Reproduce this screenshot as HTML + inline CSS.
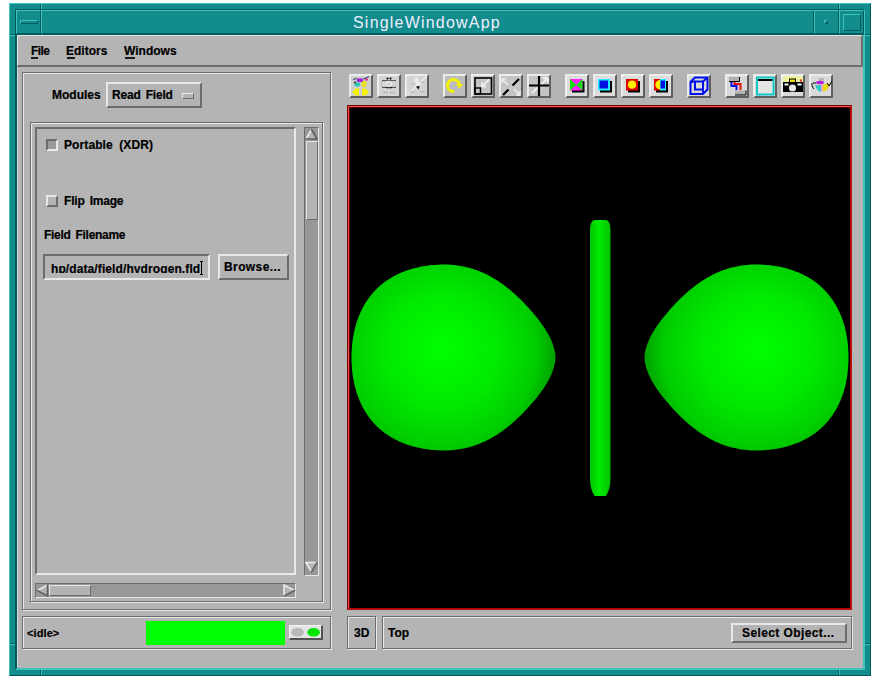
<!DOCTYPE html>
<html><head><meta charset="utf-8">
<style>
*{margin:0;padding:0;box-sizing:border-box}
html,body{width:876px;height:683px;overflow:hidden;background:#fff}
body{position:relative;font-family:"Liberation Sans",sans-serif}
.a{position:absolute}
.t{position:absolute;font-family:"Liberation Sans",sans-serif;font-weight:bold;font-size:12px;line-height:14px;color:#000;white-space:pre;-webkit-text-stroke:0.2px #000}
/* motif bevels */
.up{border-style:solid;border-color:#e8e8e8 #6c6c6c #6c6c6c #e8e8e8}
.dn{border-style:solid;border-color:#6c6c6c #e8e8e8 #e8e8e8 #6c6c6c}
.tup{border-style:solid;border-color:#3cc4bc #005c5c #005c5c #3cc4bc}
.tdn{border-style:solid;border-color:#005c5c #3cc4bc #3cc4bc #005c5c}
.etch{position:absolute;border:1px solid #6c6c6c;box-shadow:inset 1px 1px 0 #e8e8e8, 1px 1px 0 #e8e8e8}
</style></head><body>

<!-- window frame -->
<div class="a tup" style="left:9px;top:3px;width:862px;height:673px;border-width:1px;background:#128c8c"></div>
<!-- frame corner breaks -->
<div class="a" style="left:40px;top:4px;width:1px;height:6px;background:#005c5c"></div>
<div class="a" style="left:41px;top:4px;width:1px;height:6px;background:#3cc4bc"></div>
<div class="a" style="left:838px;top:4px;width:1px;height:6px;background:#005c5c"></div>
<div class="a" style="left:839px;top:4px;width:1px;height:6px;background:#3cc4bc"></div>
<div class="a" style="left:40px;top:668px;width:1px;height:7px;background:#005c5c"></div>
<div class="a" style="left:41px;top:668px;width:1px;height:7px;background:#3cc4bc"></div>
<div class="a" style="left:838px;top:668px;width:1px;height:7px;background:#005c5c"></div>
<div class="a" style="left:839px;top:668px;width:1px;height:7px;background:#3cc4bc"></div>
<div class="a" style="left:10px;top:34px;width:6px;height:1px;background:#005c5c"></div>
<div class="a" style="left:10px;top:35px;width:6px;height:1px;background:#3cc4bc"></div>
<div class="a" style="left:864px;top:34px;width:6px;height:1px;background:#005c5c"></div>
<div class="a" style="left:864px;top:35px;width:6px;height:1px;background:#3cc4bc"></div>
<div class="a" style="left:10px;top:643px;width:6px;height:1px;background:#005c5c"></div>
<div class="a" style="left:10px;top:644px;width:6px;height:1px;background:#3cc4bc"></div>
<div class="a" style="left:864px;top:643px;width:6px;height:1px;background:#005c5c"></div>
<div class="a" style="left:864px;top:644px;width:6px;height:1px;background:#3cc4bc"></div>
<!-- inner frame bevel -->
<div class="a tdn" style="left:15px;top:9px;width:850px;height:661px;border-width:1px;background:#128c8c"></div>
<!-- title bar buttons -->
<div class="a tup" style="left:16px;top:10px;width:25px;height:24px;border-width:1px"></div>
<div class="a tup" style="left:20px;top:20px;width:18px;height:4px;border-width:1px"></div>
<div class="a tup" style="left:41px;top:10px;width:773px;height:24px;border-width:1px"></div>
<div class="a tup" style="left:814px;top:10px;width:25px;height:24px;border-width:1px"></div>
<div class="a tup" style="left:824px;top:20px;width:4px;height:4px;border-width:1px"></div>
<div class="a tup" style="left:839px;top:10px;width:25px;height:24px;border-width:1px"></div>
<div class="a tup" style="left:843px;top:14px;width:18px;height:17px;border-width:1px"></div>
<div class="a" style="left:353px;top:12px;width:160px;height:22px;font-family:'Liberation Sans',sans-serif;font-size:16px;line-height:22px;color:#eef;letter-spacing:1.2px;white-space:pre">SingleWindowApp</div>

<!-- client area -->
<div class="a" style="left:16px;top:34px;width:848px;height:635px;background:#b4b4b4;border-style:solid;border-width:1px 1px 1px 1px;border-color:#005c5c #3cc4bc #3cc4bc #005c5c"></div>
<div class="a" style="left:17px;top:35px;width:1px;height:632px;background:#d8d8d8"></div>
<!-- menubar -->
<div class="a up" style="left:17px;top:35px;width:846px;height:32px;border-width:1px 2px 2px 1px"></div>
<div class="t" style="left:31px;top:44px;letter-spacing:-0.6px">File</div>
<div class="a" style="left:31px;top:57px;width:7px;height:2px;background:#1a1a1a"></div>
<div class="t" style="left:66px;top:44px">Editors</div>
<div class="a" style="left:67px;top:57px;width:8px;height:2px;background:#1a1a1a"></div>
<div class="t" style="left:124px;top:44px">Windows</div>
<div class="a" style="left:125px;top:57px;width:10px;height:2px;background:#1a1a1a"></div>

<!-- left panel -->
<div class="etch" style="left:22px;top:72px;width:309px;height:538px"></div>
<div class="t" style="left:52px;top:88px">Modules</div>
<div class="a up" style="left:106px;top:82px;width:96px;height:26px;border-width:2px"></div>
<div class="t" style="left:112px;top:88px;letter-spacing:-0.2px;word-spacing:2px">Read Field</div>
<div class="a up" style="left:182px;top:93px;width:12px;height:6px;border-width:1px"></div>

<!-- scrolled window -->
<div class="etch" style="left:30px;top:122px;width:293px;height:480px"></div>
<div class="a dn" style="left:35px;top:127px;width:261px;height:448px;border-width:2px"></div>
<div class="a dn" style="left:46px;top:139px;width:12px;height:12px;border-width:2px;background:#9a9a9a"></div>
<div class="t" style="left:64px;top:138px;letter-spacing:0.1px;word-spacing:3px">Portable (XDR)</div>
<div class="a up" style="left:46px;top:195px;width:12px;height:12px;border-width:2px"></div>
<div class="t" style="left:64px;top:194px;letter-spacing:-0.2px;word-spacing:2px">Flip Image</div>
<div class="t" style="left:44px;top:228px;letter-spacing:-0.3px;word-spacing:2px">Field Filename</div>
<div class="a dn" style="left:43px;top:254px;width:167px;height:26px;border-width:2px;overflow:hidden"></div>
<div class="a" style="left:45px;top:256px;width:163px;height:17px;overflow:hidden"><div class="t" style="left:6px;top:6px;letter-spacing:0.1px">hp/data/field/hydrogen.fld</div></div>
<div class="a" style="left:201px;top:261px;width:1px;height:14px;background:#000"></div>
<div class="a" style="left:200px;top:261px;width:3px;height:1px;background:#000"></div>
<div class="a" style="left:200px;top:274px;width:3px;height:1px;background:#000"></div>
<div class="a up" style="left:218px;top:254px;width:71px;height:26px;border-width:2px"></div>
<div class="t" style="left:224px;top:260px;letter-spacing:0.4px">Browse...</div>

<!-- v scrollbar -->
<div class="a dn" style="left:304px;top:127px;width:15px;height:449px;border-width:1px;background:#989898"></div>
<div class="a up" style="left:306px;top:141px;width:12px;height:79px;border-width:1px;background:#b4b4b4"></div>
<!-- h scrollbar -->
<div class="a dn" style="left:35px;top:583px;width:261px;height:15px;border-width:1px;background:#989898"></div>
<div class="a up" style="left:49px;top:585px;width:42px;height:11px;border-width:1px;background:#b4b4b4"></div>
<svg class="a" style="left:0;top:0" width="876" height="683" viewBox="0 0 876 683">
<g stroke-width="1.6" stroke-linecap="square">
<polygon points="311.5,129.5 306,139 317,139" fill="#b4b4b4"/>
<path d="M311.5,129.5 L306,139" stroke="#ececec" fill="none"/>
<path d="M311.5,129.5 L317,139 L306,139" stroke="#606060" fill="none"/>
<polygon points="306,562.5 317,562.5 311.5,572" fill="#b4b4b4"/>
<path d="M317,562.5 L306,562.5 L311.5,572" stroke="#ececec" fill="none"/>
<path d="M317,562.5 L311.5,572" stroke="#606060" fill="none"/>
<polygon points="37,590.5 47.5,585 47.5,596" fill="#b4b4b4"/>
<path d="M47.5,585 L37,590.5" stroke="#ececec" fill="none"/>
<path d="M37,590.5 L47.5,596 L47.5,585" stroke="#606060" fill="none"/>
<polygon points="294.5,590.5 284,585 284,596" fill="#b4b4b4"/>
<path d="M284,596 L284,585 L294.5,590.5" stroke="#ececec" fill="none"/>
<path d="M294.5,590.5 L284,596" stroke="#606060" fill="none"/>
</g>
</svg>

<!-- status left -->
<div class="etch" style="left:22px;top:616px;width:309px;height:33px"></div>
<div class="t" style="left:27px;top:626px;font-size:11px;letter-spacing:0.1px">&lt;idle&gt;</div>
<div class="a" style="left:146px;top:621px;width:139px;height:24px;background:#00ff00"></div>
<div class="a" style="left:289px;top:625px;width:34px;height:15px;background:#e4e4e4;border-style:solid;border-width:1px 2px 2px 1px;border-color:#f4f4f4 #505050 #505050 #f4f4f4"></div>
<svg class="a" style="left:289px;top:625px" width="34" height="15" viewBox="0 0 34 15">
<ellipse cx="8.6" cy="7.3" rx="6.3" ry="4.3" fill="#b8b8b8"/>
<ellipse cx="24.6" cy="7.3" rx="6.3" ry="4.3" fill="#00e400"/>
</svg>

<!-- toolbar -->
<div class="a" style="left:349px;top:74px;width:24px;height:24px;background:#cfcfcf;border-style:solid;border-width:2px;border-color:#ececec #606060 #606060 #ececec"></div>
<div class="a" style="left:377px;top:74px;width:24px;height:24px;background:#d4d4d4;border-style:solid;border-width:2px;border-color:#ececec #606060 #606060 #ececec"></div>
<div class="a" style="left:405px;top:74px;width:24px;height:24px;background:#d4d4d4;border-style:solid;border-width:2px;border-color:#ececec #606060 #606060 #ececec"></div>
<div class="a" style="left:443px;top:74px;width:24px;height:24px;background:#bcbcbc;border-style:solid;border-width:2px;border-color:#ececec #606060 #606060 #ececec"></div>
<div class="a" style="left:471px;top:74px;width:24px;height:24px;background:#c4c4c4;border-style:solid;border-width:2px;border-color:#ececec #606060 #606060 #ececec"></div>
<div class="a" style="left:499px;top:74px;width:24px;height:24px;background:#c4c4c4;border-style:solid;border-width:2px;border-color:#ececec #606060 #606060 #ececec"></div>
<div class="a" style="left:527px;top:74px;width:24px;height:24px;background:#c4c4c4;border-style:solid;border-width:2px;border-color:#ececec #606060 #606060 #ececec"></div>
<div class="a" style="left:565px;top:74px;width:24px;height:24px;background:#dcdcdc;border-style:solid;border-width:2px;border-color:#ececec #606060 #606060 #ececec"></div>
<div class="a" style="left:593px;top:74px;width:24px;height:24px;background:#dcdcdc;border-style:solid;border-width:2px;border-color:#ececec #606060 #606060 #ececec"></div>
<div class="a" style="left:621px;top:74px;width:24px;height:24px;background:#dcdcdc;border-style:solid;border-width:2px;border-color:#ececec #606060 #606060 #ececec"></div>
<div class="a" style="left:649px;top:74px;width:24px;height:24px;background:#dcdcdc;border-style:solid;border-width:2px;border-color:#ececec #606060 #606060 #ececec"></div>
<div class="a" style="left:687px;top:74px;width:24px;height:24px;background:#d8d8d8;border-style:solid;border-width:2px;border-color:#ececec #606060 #606060 #ececec"></div>
<div class="a" style="left:725px;top:74px;width:24px;height:24px;background:#d8d8d8;border-style:solid;border-width:2px;border-color:#ececec #606060 #606060 #ececec"></div>
<div class="a" style="left:753px;top:74px;width:24px;height:24px;background:#dadada;border-style:solid;border-width:2px;border-color:#ececec #606060 #606060 #ececec"></div>
<div class="a" style="left:781px;top:74px;width:24px;height:24px;background:#dadada;border-style:solid;border-width:2px;border-color:#ececec #606060 #606060 #ececec"></div>
<div class="a" style="left:809px;top:74px;width:24px;height:24px;background:#dadada;border-style:solid;border-width:2px;border-color:#ececec #606060 #606060 #ececec"></div>
<svg class="a" style="left:0;top:0" width="876" height="110" viewBox="0 0 876 110">
<!-- 1 -->
<g>
<path d="M353,80 l2,-1.5 l3,1 M363,79 l3,-1 l3,-1.5" stroke="#303060" stroke-width="1" fill="none"/>
<ellipse cx="360" cy="80.3" rx="3.2" ry="2" fill="#a020e0"/>
<circle cx="366.5" cy="79.5" r="1.2" fill="#e02080"/>
<ellipse cx="357.3" cy="84.5" rx="2.8" ry="2.2" fill="#30c8b8"/>
<ellipse cx="364" cy="84" rx="2.6" ry="3.2" fill="#e8e020"/>
<circle cx="355" cy="82.5" r="1" fill="#202020"/>
<path d="M352,92 l3.5,-3.5 h3.5 v7 h-3.5 z" fill="#f4f400"/>
<path d="M369,92 l-3.5,-3.5 h-3.5 v7 h3.5 z" fill="#f4f400"/>
</g>
<!-- 2 grayed -->
<g>
<line x1="382" y1="80.5" x2="396" y2="80.5" stroke="#606060" stroke-width="1"/>
<line x1="382" y1="87.5" x2="396" y2="87.5" stroke="#505050" stroke-width="1"/>
<circle cx="387.5" cy="78.6" r="1.1" fill="#101010"/><circle cx="390.5" cy="78.6" r="1.1" fill="#101010"/>
<circle cx="387.5" cy="87.5" r="1.1" fill="#101010"/><circle cx="390.5" cy="87.5" r="1.1" fill="#101010"/>
<rect x="381.5" y="81.5" width="14.5" height="5" fill="none" stroke="#b4b4b4" stroke-width="1" stroke-dasharray="1,1"/>
<circle cx="388.7" cy="84" r="2.8" fill="none" stroke="#f4f4f4" stroke-width="1"/>
<path d="M383,92.5 h5 M390,92.5 h5" stroke="#bcbcbc" stroke-width="2"/>
</g>
<!-- 3 grayed -->
<g>
<path d="M408,94 L427,76" stroke="#f0f0f0" stroke-width="1.2" fill="none"/>
<path d="M414,78 l3,-1 l3,9 l-3,2 z" fill="#ececec"/>
<path d="M411,84 h4 M421,82 h4 M410,92 h5 M420,92 h5" stroke="#bcbcbc" stroke-width="1.5" fill="none"/>
<path d="M416,86.5 l2.5,3 l1.2,-3.5 z" fill="#000"/>
</g>
<!-- 4 rotate -->
<g>
<path d="M453,91.5 A6,6 0 1 1 459.5,85" stroke="#f4f400" stroke-width="3" fill="none" stroke-linecap="round"/>
<path d="M456,84 l7,0 l-3.5,4.5 z" fill="#f4f400"/>
</g>
<!-- 5 -->
<g>
<rect x="475" y="78" width="16.5" height="16" fill="none" stroke="#000" stroke-width="1.6"/>
<rect x="475" y="88" width="5.5" height="6" fill="none" stroke="#000" stroke-width="1.4"/>
<path d="M489,79.5 L482,86.5 M482,86.5 v-4 M482,86.5 h4" stroke="#eeeeee" stroke-width="2" fill="none"/>
</g>
<!-- 6 -->
<g>
<path d="M519,79 L512.5,85.5 M508.5,89.5 L503,95" stroke="#000" stroke-width="2.2" fill="none"/>
<path d="M502,79 l6,6 M502,79 h4 M502,79 v4 M520,95 l-6,-6 M520,95 h-4 M520,95 v-4" stroke="#eeeeee" stroke-width="1.5" fill="none"/>
</g>
<!-- 7 -->
<g>
<path d="M532,93 L548,78 M548,78 h-5 M548,78 v5" stroke="#eeeeee" stroke-width="2" fill="none"/>
<path d="M539,76 V96 M529,85.5 H549" stroke="#000" stroke-width="2.2" fill="none"/>
</g>
<!-- 8 -->
<g>
<rect x="572" y="81" width="12.5" height="11.5" fill="#000"/>
<rect x="570" y="79" width="12.5" height="11.5" fill="#ff20ff"/>
<path d="M570,79 L576.25,84.75 L570,90.5 Z M582.5,79 L576.25,84.75 L582.5,90.5 Z" fill="#10e010"/>
</g>
<!-- 9 -->
<g>
<rect x="600" y="81" width="12" height="11.5" fill="#000"/>
<rect x="598" y="79" width="12" height="11.5" fill="#20f0ff"/>
<rect x="599.5" y="80.5" width="8.5" height="8" fill="#0010e0"/>
</g>
<!-- 10 -->
<g>
<rect x="628" y="81" width="12" height="11.5" fill="#000"/>
<rect x="626" y="79" width="12" height="11.5" fill="#e00000"/>
<circle cx="632" cy="84.7" r="4.1" fill="#ffee00"/>
</g>
<!-- 11 -->
<g>
<rect x="656" y="81" width="12" height="11.5" fill="#000"/>
<rect x="654" y="79" width="6.5" height="11.5" fill="#e00000"/>
<path d="M660,80 A4.7,4.7 0 0 0 660,89.4 Z" fill="#ffee00"/>
<rect x="660" y="79" width="6" height="11.5" fill="#20f0ff"/>
<rect x="660.5" y="80.5" width="4.5" height="8" fill="#0010e0"/>
</g>
<!-- 12 cube -->
<g fill="none" stroke="#0010e8" stroke-width="2">
<path d="M695,77.5 H707.5 V89.5 L703,94 H690.5 V82 Z"/>
<rect x="695" y="81.5" width="8" height="8"/>
<path d="M690.5,82 L695,81.5 M707.5,77.5 L703,81.5 M703,94 L703,89.5"/>
</g>
<!-- 13 -->
<g>
<rect x="729" y="77" width="10.5" height="4.5" fill="#b0b0b0"/>
<path d="M729,81.5 H739.5 V77" stroke="#000" stroke-width="1" fill="none"/>
<path d="M731.5,82 V86 H736.5 V90" stroke="#0010e0" stroke-width="2" fill="none"/>
<path d="M734.5,82 V84 H740.5 V90" stroke="#e01010" stroke-width="2" fill="none"/>
<rect x="735" y="90.5" width="11" height="4.5" fill="#b0b0b0"/>
<path d="M735,95 H746 V90.5" stroke="#000" stroke-width="1" fill="none"/>
</g>
<!-- 14 -->
<g>
<rect x="757" y="77.5" width="16.5" height="17" fill="#e4e4e4" stroke="#10c8c8" stroke-width="2"/>
<rect x="758" y="79" width="14.5" height="2" fill="#000"/>
</g>
<!-- 15 camera -->
<g>
<rect x="783" y="76" width="20" height="6" fill="#f0f0a0"/>
<rect x="783" y="82" width="20" height="10" fill="#000"/>
<rect x="789.5" y="79" width="6" height="3.5" fill="#f0e000" stroke="#000" stroke-width="1"/>
<rect x="784.5" y="83.5" width="4" height="2" fill="#fff"/>
<rect x="797.5" y="83.5" width="4" height="2" fill="#fff"/>
<circle cx="792.5" cy="88" r="3.6" fill="#e8e8e8"/>
<rect x="800" y="79.5" width="2" height="2" fill="#e02020"/>
</g>
<!-- 16 teapot -->
<g>
<rect x="819" y="78" width="5" height="3" fill="#b8b8b8"/>
<path d="M813,83 h3 M812,83 v3 l2,3" stroke="#000" stroke-width="1" fill="none"/>
<ellipse cx="820" cy="82.5" rx="4" ry="1.8" fill="#b020d0"/>
<path d="M815,85 Q820,95 828,89 L830,83 Q822,85 815,85 Z" fill="#ffa0d0"/>
<path d="M815,85 Q817,91 821,92 L821,85 Z" fill="#30c8c8"/>
<path d="M823,85 L829,83 Q829,90 823,92 Z" fill="#e8e000"/>
<path d="M827,83 l2,3 l3,-5" stroke="#000" stroke-width="1" fill="none"/>
</g>
</svg>

<!-- viewport -->
<div class="a" style="left:347px;top:105px;width:505px;height:505px;background:#000;border-style:solid;border-width:1px;border-color:#700808 #c01010 #c01010 #700808"></div>
<div class="a" style="left:348px;top:106px;width:503px;height:503px;border-style:solid;border-width:1px;border-color:#ff4848 #b00000 #b00000 #ff4848"></div>
<div class="a" style="left:349px;top:107px;width:501px;height:501px;border-style:solid;border-width:1px 0 0 1px;border-color:#600000"></div>

<svg class="a" style="left:0;top:0" width="876" height="683" viewBox="0 0 876 683">
<defs>
<radialGradient id="gL" gradientUnits="userSpaceOnUse" cx="442" cy="352" r="112" fx="442" fy="348">
<stop offset="0" stop-color="#00ff00"/><stop offset="0.5" stop-color="#00ea00"/><stop offset="0.85" stop-color="#00cc00"/><stop offset="1" stop-color="#00a400"/></radialGradient>
<radialGradient id="gR" gradientUnits="userSpaceOnUse" cx="758" cy="352" r="112" fx="758" fy="348">
<stop offset="0" stop-color="#00ff00"/><stop offset="0.5" stop-color="#00ea00"/><stop offset="0.85" stop-color="#00cc00"/><stop offset="1" stop-color="#00a400"/></radialGradient>
<linearGradient id="gD" x1="0" y1="0" x2="1" y2="0">
<stop offset="0" stop-color="#00c400"/><stop offset="0.45" stop-color="#00ec00"/><stop offset="1" stop-color="#00c000"/></linearGradient>
<clipPath id="vc"><rect x="350" y="107" width="500" height="501"/></clipPath>
</defs>
<g clip-path="url(#vc)">
<path d="M351.5,357.5 L351.5,354.2 L351.7,351.0 L351.9,347.8 L352.1,344.5 L352.5,341.3 L353.0,338.0 L353.5,334.8 L354.2,331.6 L354.9,328.4 L355.8,325.2 L356.7,322.0 L357.8,318.9 L359.0,315.8 L360.3,312.7 L361.7,309.7 L363.2,306.7 L364.9,303.8 L366.7,301.0 L368.6,298.2 L370.7,295.5 L372.8,292.9 L375.1,290.5 L377.5,288.1 L379.9,285.8 L382.5,283.7 L385.2,281.6 L388.0,279.7 L390.8,277.9 L393.7,276.2 L396.7,274.7 L399.7,273.3 L402.8,272.0 L405.9,270.8 L409.0,269.7 L412.2,268.8 L415.4,267.9 L418.6,267.2 L421.8,266.5 L425.0,266.0 L428.3,265.5 L431.5,265.1 L434.8,264.9 L438.0,264.7 L441.2,264.5 L444.5,264.5 L447.8,264.6 L451.0,264.7 L454.2,265.0 L457.4,265.4 L460.6,265.9 L463.8,266.5 L467.0,267.2 L470.1,268.1 L473.2,269.0 L476.3,270.0 L479.4,271.2 L482.4,272.4 L485.3,273.8 L488.2,275.2 L491.1,276.7 L493.9,278.4 L496.7,280.1 L499.5,281.9 L502.1,283.7 L504.8,285.7 L507.4,287.7 L509.9,289.8 L512.4,291.9 L514.9,294.1 L517.4,296.4 L519.8,298.7 L522.1,301.1 L524.5,303.5 L528.0,307.3 L530.4,309.9 L532.7,312.6 L535.0,315.3 L537.3,318.1 L539.5,321.0 L541.7,324.0 L543.9,327.1 L545.9,330.3 L547.9,333.6 L549.7,337.1 L551.4,340.6 L552.8,344.2 L554.0,347.9 L554.9,351.7 L555.4,355.6 L555.4,359.4 L554.9,363.3 L554.0,367.1 L552.8,370.8 L551.4,374.4 L549.7,377.9 L547.9,381.4 L545.9,384.7 L543.9,387.9 L541.7,391.0 L539.5,394.0 L537.3,396.9 L535.0,399.7 L532.7,402.4 L530.4,405.1 L528.0,407.7 L524.5,411.5 L522.1,413.9 L519.8,416.3 L517.4,418.6 L514.9,420.9 L512.4,423.1 L509.9,425.2 L507.4,427.3 L504.8,429.3 L502.1,431.3 L499.5,433.1 L496.7,434.9 L493.9,436.6 L491.1,438.3 L488.2,439.8 L485.3,441.2 L482.4,442.6 L479.4,443.8 L476.3,445.0 L473.2,446.0 L470.1,446.9 L467.0,447.8 L463.8,448.5 L460.6,449.1 L457.4,449.6 L454.2,450.0 L451.0,450.3 L447.8,450.4 L444.5,450.5 L441.2,450.5 L438.0,450.3 L434.8,450.1 L431.5,449.9 L428.3,449.5 L425.0,449.0 L421.8,448.5 L418.6,447.8 L415.4,447.1 L412.2,446.2 L409.0,445.3 L405.9,444.2 L402.8,443.0 L399.7,441.7 L396.7,440.3 L393.7,438.8 L390.8,437.1 L388.0,435.3 L385.2,433.4 L382.5,431.3 L379.9,429.2 L377.5,426.9 L375.1,424.5 L372.8,422.1 L370.7,419.5 L368.6,416.8 L366.7,414.0 L364.9,411.2 L363.2,408.3 L361.7,405.3 L360.3,402.3 L359.0,399.2 L357.8,396.1 L356.7,393.0 L355.8,389.8 L354.9,386.6 L354.2,383.4 L353.5,380.2 L353.0,377.0 L352.5,373.7 L352.1,370.5 L351.9,367.2 L351.7,364.0 L351.5,360.8Z" fill="url(#gL)"/>
<path d="M644.5,357.5 L644.8,353.6 L645.5,349.8 L646.6,346.1 L647.9,342.4 L649.5,338.8 L651.2,335.3 L653.1,332.0 L655.1,328.7 L657.2,325.6 L659.4,322.5 L661.6,319.6 L663.9,316.7 L666.2,313.9 L668.5,311.2 L670.8,308.6 L674.3,304.8 L676.7,302.3 L679.0,299.9 L681.4,297.5 L683.9,295.2 L686.3,293.0 L688.8,290.8 L691.4,288.7 L693.9,286.7 L696.5,284.7 L699.2,282.8 L701.9,280.9 L704.7,279.2 L707.5,277.5 L710.3,276.0 L713.2,274.5 L716.1,273.1 L719.1,271.8 L722.1,270.6 L725.2,269.5 L728.3,268.5 L731.4,267.6 L734.6,266.9 L737.8,266.2 L741.0,265.6 L744.2,265.2 L747.4,264.9 L750.6,264.6 L753.9,264.5 L757.1,264.5 L760.4,264.6 L763.6,264.8 L766.9,265.0 L770.1,265.3 L773.3,265.7 L776.6,266.2 L779.8,266.8 L783.0,267.5 L786.2,268.3 L789.4,269.2 L792.5,270.2 L795.7,271.4 L798.8,272.6 L801.8,274.0 L804.8,275.4 L807.7,277.1 L810.6,278.8 L813.4,280.6 L816.1,282.6 L818.8,284.7 L821.3,286.9 L823.7,289.3 L826.1,291.7 L828.3,294.2 L830.4,296.9 L832.4,299.6 L834.2,302.4 L836.0,305.3 L837.6,308.2 L839.0,311.2 L840.4,314.2 L841.6,317.3 L842.8,320.4 L843.8,323.6 L844.7,326.8 L845.5,330.0 L846.2,333.2 L846.8,336.4 L847.3,339.7 L847.7,342.9 L848.0,346.1 L848.2,349.4 L848.4,352.6 L848.5,355.9 L848.5,359.1 L848.4,362.4 L848.2,365.6 L848.0,368.9 L847.7,372.1 L847.3,375.3 L846.8,378.6 L846.2,381.8 L845.5,385.0 L844.7,388.2 L843.8,391.4 L842.8,394.6 L841.6,397.7 L840.4,400.8 L839.0,403.8 L837.6,406.8 L836.0,409.7 L834.2,412.6 L832.4,415.4 L830.4,418.1 L828.3,420.8 L826.1,423.3 L823.7,425.7 L821.3,428.1 L818.8,430.3 L816.1,432.4 L813.4,434.4 L810.6,436.2 L807.7,437.9 L804.8,439.6 L801.8,441.0 L798.8,442.4 L795.7,443.6 L792.5,444.8 L789.4,445.8 L786.2,446.7 L783.0,447.5 L779.8,448.2 L776.6,448.8 L773.3,449.3 L770.1,449.7 L766.9,450.0 L763.6,450.2 L760.4,450.4 L757.1,450.5 L753.9,450.5 L750.6,450.4 L747.4,450.1 L744.2,449.8 L741.0,449.4 L737.8,448.8 L734.6,448.1 L731.4,447.4 L728.3,446.5 L725.2,445.5 L722.1,444.4 L719.1,443.2 L716.1,441.9 L713.2,440.5 L710.3,439.0 L707.5,437.5 L704.7,435.8 L701.9,434.1 L699.2,432.2 L696.5,430.3 L693.9,428.3 L691.4,426.3 L688.8,424.2 L686.3,422.0 L683.9,419.8 L681.4,417.5 L679.0,415.1 L676.7,412.7 L674.3,410.2 L670.8,406.4 L668.5,403.8 L666.2,401.1 L663.9,398.3 L661.6,395.4 L659.4,392.5 L657.2,389.4 L655.1,386.3 L653.1,383.0 L651.2,379.7 L649.5,376.2 L647.9,372.6 L646.6,368.9 L645.5,365.2 L644.8,361.4Z" fill="url(#gR)"/>
<path d="M594,220 H606.5 Q610.5,221.5 610.5,231 V479 Q610.5,489 606,496 H594.5 Q590,489 590,479 V231 Q590,221.5 594,220 Z" fill="url(#gD)"/>
</g>
</svg>
<!-- status right -->
<div class="etch" style="left:347px;top:616px;width:29px;height:33px"></div>
<div class="t" style="left:354px;top:626px">3D</div>
<div class="etch" style="left:382px;top:616px;width:470px;height:33px"></div>
<div class="t" style="left:388px;top:626px">Top</div>
<div class="a up" style="left:731px;top:623px;width:116px;height:20px;border-width:2px"></div>
<div class="t" style="left:742px;top:626px;letter-spacing:0.4px">Select Object...</div>

</body></html>
